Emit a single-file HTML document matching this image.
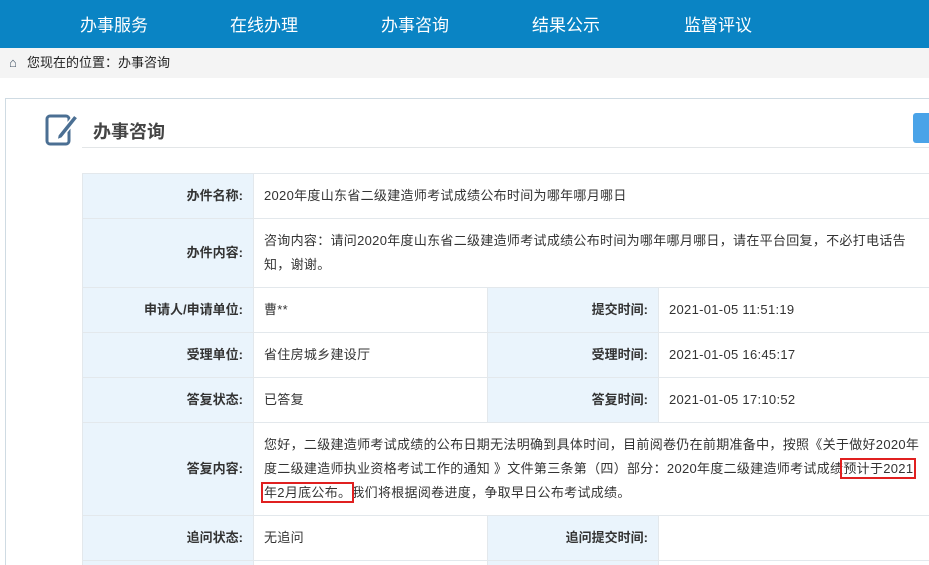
<!DOCTYPE html>
<html><head><meta charset="utf-8"><style>
html,body{margin:0;width:929px;height:565px;overflow:hidden;background:#fff;font-family:"Liberation Sans","Noto Sans CJK SC",sans-serif}
#root{position:relative;width:929px;height:565px;overflow:hidden}
.nav{position:absolute;left:0;top:0;width:929px;height:48px;background:#0a84c4}
.nav span{position:absolute;top:11px;color:#fff;font-size:17px}
.bc{position:absolute;left:0;top:48px;width:929px;height:30px;background:#f4f4f4;font-size:13px;color:#222;line-height:30px}
.box{position:absolute;left:5px;top:98px;width:924px;height:467px;border-left:1px solid #cfdbe3;border-top:1px solid #cfdbe3}
.title{position:absolute;left:93px;top:118px;font-size:18px;font-weight:bold;color:#444}
.tline{position:absolute;left:82px;top:147px;width:847px;height:1px;background:#e3e6e8}
.btn{position:absolute;left:913px;top:113px;width:16px;height:30px;background:#4aa3e8;border-radius:3px 0 0 3px}
.tw{position:absolute;left:82px;top:173px;width:847px;height:392px;overflow:hidden}
table{border-collapse:collapse;table-layout:fixed;width:900px;font-size:13px;color:#333;background:#fff}
td{border:1px solid #e3e8ec;padding:0 10px;line-height:24px;white-space:nowrap;overflow:hidden;letter-spacing:0.3px}
td.l{background:#eaf4fc;text-align:right;font-weight:bold;color:#333;letter-spacing:0}
.red{outline:2px solid #e02020;outline-offset:1px}
</style></head><body><div id="root">
<div class="nav"><span style="left:80px">办事服务</span><span style="left:230px">在线办理</span><span style="left:381px">办事咨询</span><span style="left:532px">结果公示</span><span style="left:684px">监督评议</span></div>
<div class="bc"><span style="position:absolute;left:9px;color:#456">⌂</span><span style="position:absolute;left:27px">您现在的位置：办事咨询</span></div>
<div class="box"></div>
<svg style="position:absolute;left:44px;top:111px" width="36" height="36" viewBox="0 0 36 36"><rect x="3" y="5" width="22" height="28" rx="3" fill="none" stroke="#4b6f93" stroke-width="3"/><path d="M14 24 L30 4 L34 7 L18 27 L13 29 Z" fill="#4b6f93" stroke="#fff" stroke-width="1.5"/></svg>
<div class="title">办事咨询</div>
<div class="tline"></div>
<div class="btn"></div>
<div class="tw"><table>
<colgroup><col style="width:171px"><col style="width:234px"><col style="width:171px"><col style="width:324px"></colgroup>
<tr style="height:45px"><td class="l">办件名称:</td><td colspan="3">2020年度山东省二级建造师考试成绩公布时间为哪年哪月哪日</td></tr>
<tr style="height:69px"><td class="l">办件内容:</td><td colspan="3">咨询内容：请问2020年度山东省二级建造师考试成绩公布时间为哪年哪月哪日，请在平台回复，不必打电话告<br>知，谢谢。</td></tr>
<tr style="height:45px"><td class="l">申请人/申请单位:</td><td>曹**</td><td class="l">提交时间:</td><td>2021-01-05 11:51:19</td></tr>
<tr style="height:45px"><td class="l">受理单位:</td><td>省住房城乡建设厅</td><td class="l">受理时间:</td><td>2021-01-05 16:45:17</td></tr>
<tr style="height:45px"><td class="l">答复状态:</td><td>已答复</td><td class="l">答复时间:</td><td>2021-01-05 17:10:52</td></tr>
<tr style="height:93px"><td class="l">答复内容:</td><td colspan="3">您好，二级建造师考试成绩的公布日期无法明确到具体时间，目前阅卷仍在前期准备中，按照《关于做好2020年<br>度二级建造师执业资格考试工作的通知 》文件第三条第（四）部分：2020年度二级建造师考试成绩<span class="red">预计于2021</span><br><span class="red">年2月底公布。</span>我们将根据阅卷进度，争取早日公布考试成绩。</td></tr>
<tr style="height:45px"><td class="l">追问状态:</td><td>无追问</td><td class="l">追问提交时间:</td><td></td></tr>
<tr style="height:45px"><td class="l"></td><td></td><td class="l"></td><td></td></tr>
</table></div>
</div></body></html>
